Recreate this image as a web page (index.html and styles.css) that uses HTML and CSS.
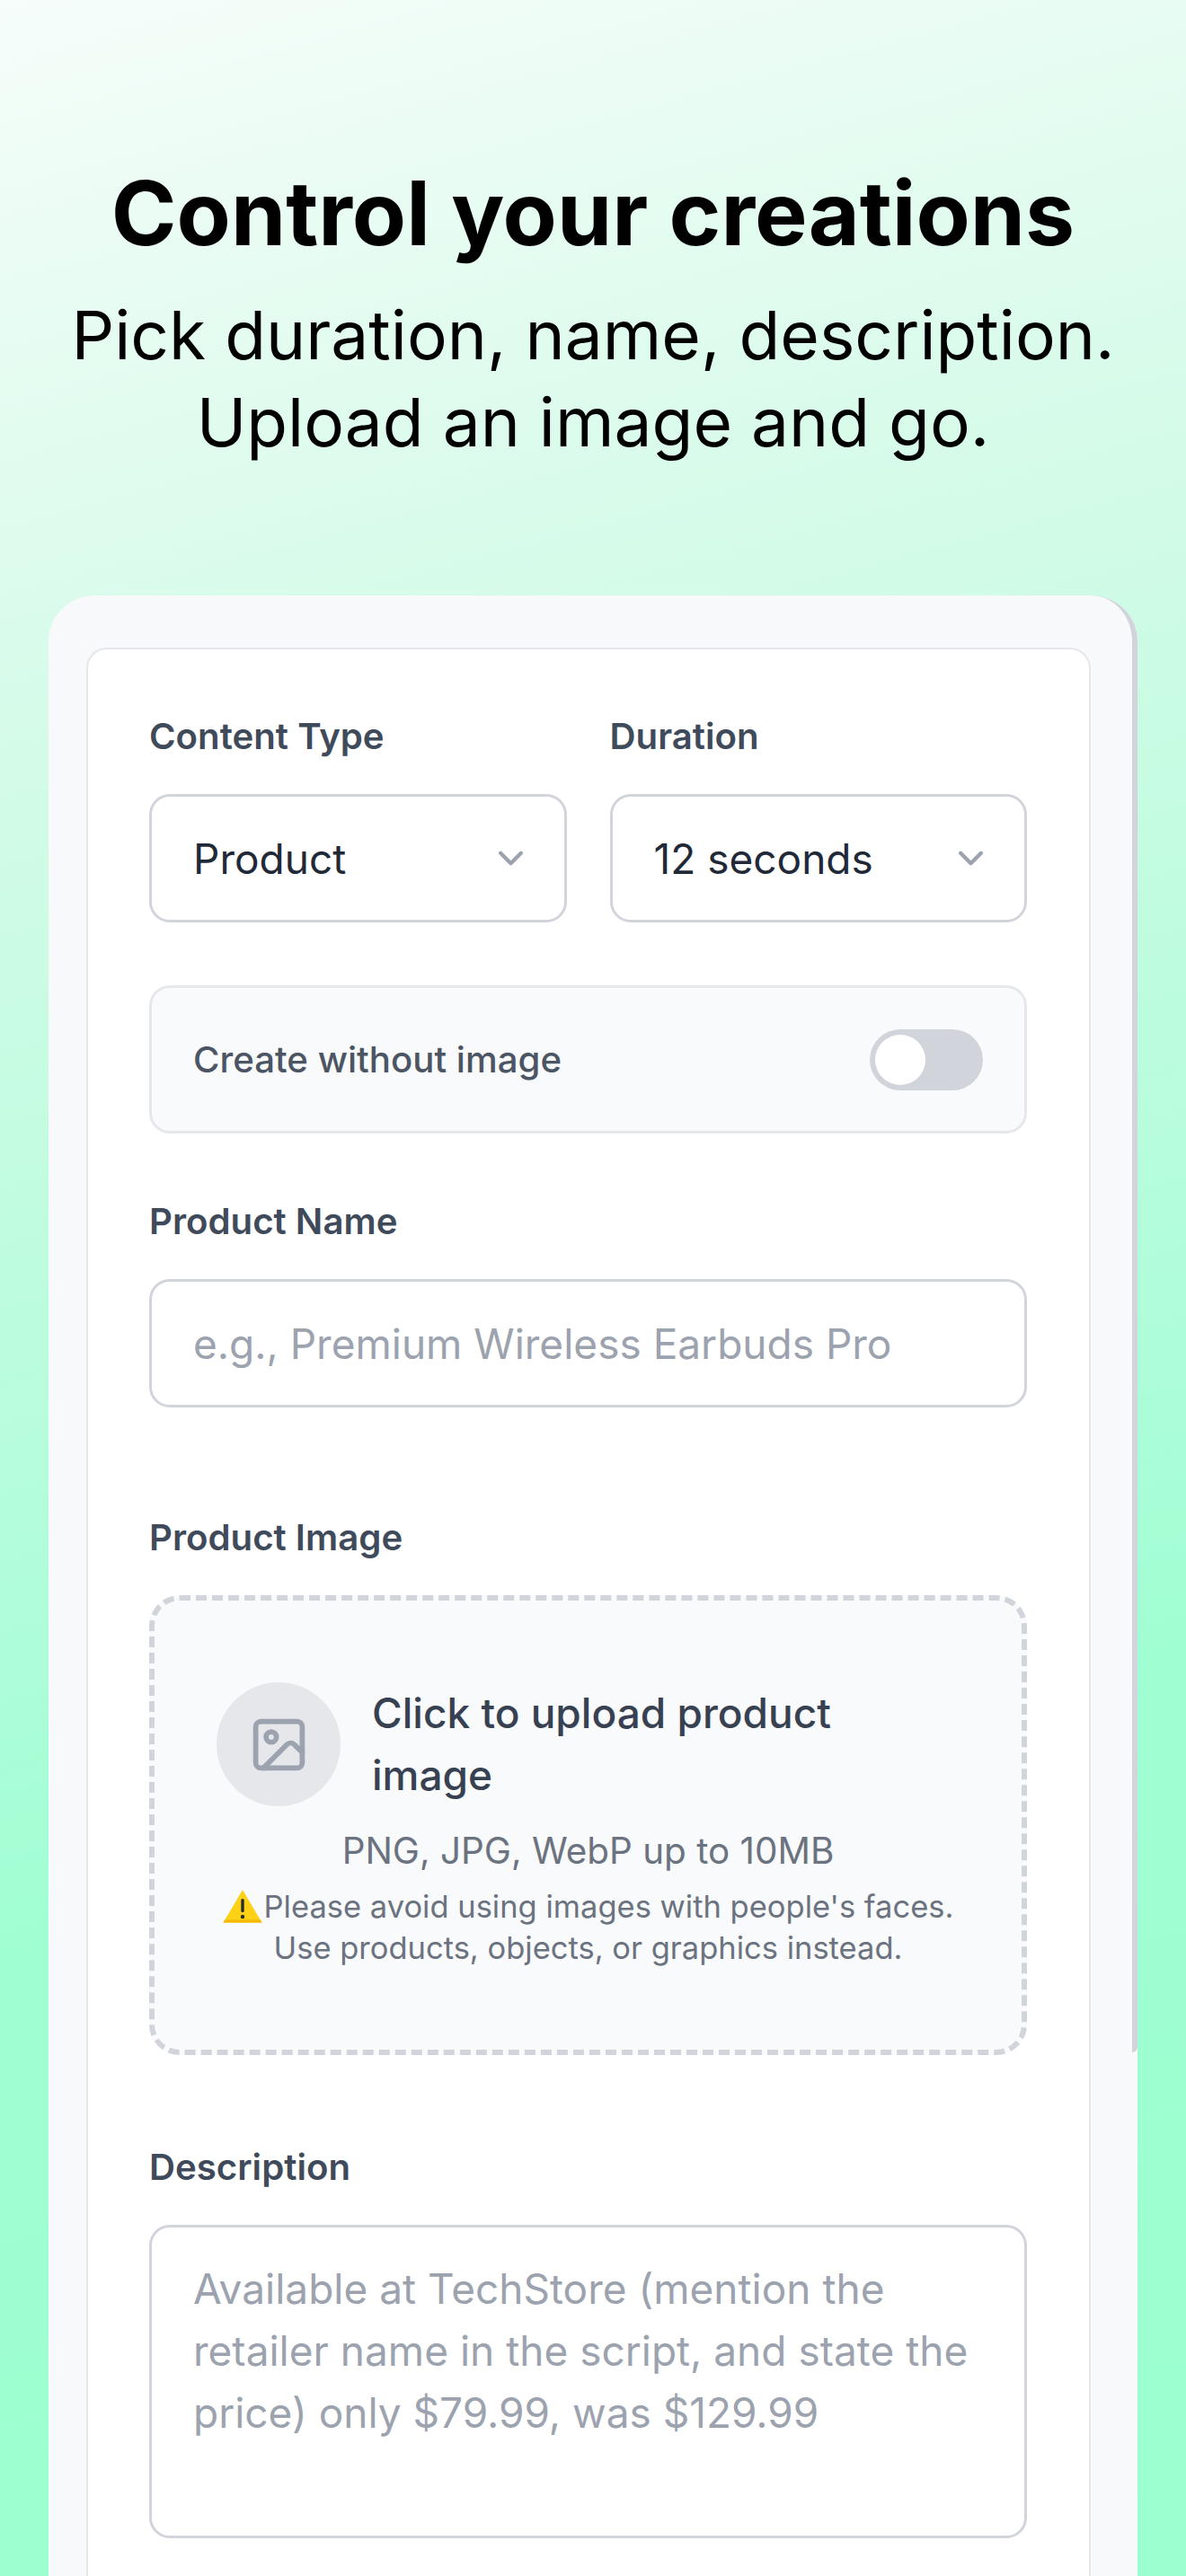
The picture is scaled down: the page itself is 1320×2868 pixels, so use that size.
FILE: index.html
```html
<!DOCTYPE html>
<html lang="en">

<head>
   <meta charset="UTF-8">
   <meta name="viewport" content="width=device-width, initial-scale=1.0">
   <title>Control your creations</title>
   <link rel="stylesheet" href="styles.css">
</head>

<body>

   <header class="hero">
       <h1>Control your creations</h1>
       <p>Pick duration, name, description.<br>Upload an image and go.</p>
   </header>

   <main class="panel">
       <form class="card">
           <div class="two-cols">
               <div>
                   <div class="label">Content Type</div>
                   <div class="control select">
                       <span>Product</span>
                       <svg class="chevron" viewBox="0 0 20 20" fill="none" stroke="currentColor" stroke-width="1.5" stroke-linecap="round" stroke-linejoin="round"><path d="M6 8l4 4 4-4"/></svg>
                   </div>
               </div>
               <div>
                   <div class="label">Duration</div>
                   <div class="control select">
                       <span>12 seconds</span>
                       <svg class="chevron" viewBox="0 0 20 20" fill="none" stroke="currentColor" stroke-width="1.5" stroke-linecap="round" stroke-linejoin="round"><path d="M6 8l4 4 4-4"/></svg>
                   </div>
               </div>
           </div>

           <div class="toggle-row">
               <span>Create without image</span>
               <div class="toggle"><div class="thumb"></div></div>
           </div>

           <div class="label name-label">Product Name</div>
           <div class="control placeholder">e.g., Premium Wireless Earbuds Pro</div>

           <div class="label image-label">Product Image</div>
           <div class="upload">
               <div class="upload-top">
                   <div class="upload-circle">
                       <svg viewBox="0 0 24 24" fill="none" stroke="currentColor" stroke-width="2" stroke-linecap="round" stroke-linejoin="round">
                           <rect x="3" y="3" width="18" height="18" rx="2"/>
                           <circle cx="9" cy="9" r="2"/>
                           <path d="M21 15l-3.086-3.086a2 2 0 0 0-2.828 0L6 21"/>
                       </svg>
                   </div>
                   <div class="upload-title">Click to upload product image</div>
               </div>
               <div class="upload-hint">PNG, JPG, WebP up to 10MB</div>
               <div class="upload-warning">
                   <svg class="warn-icon" viewBox="0 0 44 38">
                       <path d="M22 1L43.500 37.500H0.500Z" fill="#fcd116"/>
                       <path d="M0.500 37.500H43.500L42 34.500H2Z" fill="#f5b800"/>
                       <rect x="20.300" y="11" width="3.400" height="15" rx="1.500" fill="#2b2b2b"/>
                       <circle cx="22" cy="31" r="2.200" fill="#2b2b2b"/>
                   </svg>Please avoid using images with people's faces.<br>Use products, objects, or graphics instead.
               </div>
           </div>

           <div class="label desc-label">Description</div>
           <div class="control textarea placeholder">Available at TechStore (mention the retailer name in the script, and state the price) only $79.99, was $129.99</div>
       </form>
   </main>

</body>

</html>
```

FILE: styles.css
```css
* {
    box-sizing: border-box;
}

html, body {
    margin: 0;
    height: 2868px;
    overflow: hidden;
}

body {
    font-family: Inter, "Noto Sans", sans-serif;
    background: linear-gradient(165deg, #f6fdfa 0%, #d2fbe7 28%, #a0fed3 68%, #9bffcf 100%);
    color: #000;
}

.hero {
    height: 663px;
    padding-top: 170px;
    text-align: center;
}

.hero h1 {
    margin: 0;
    font-size: 98.400px;
    font-weight: 700;
    line-height: 136px;
}

.hero p {
    margin: 19px 0 0;
    font-size: 74.800px;
    line-height: 97px;
}

.panel {
    position: relative;
    width: 1212px;
    height: 2300px;
    margin-left: 54px;
    padding: 58px 52px 0 42px;
    background-color: #f8f9fb;
    border-radius: 51px 51px 0 0;
}

/* grey edge on the right, stops partway down */
.panel::after {
    content: "";
    position: absolute;
    top: 0;
    left: 0;
    right: 0;
    height: 1622px;
    border-right: 6px solid #d1d5db;
    border-radius: 51px 51px 6px 0;
    pointer-events: none;
}

.card {
    height: 2240px;
    padding: 68px 69px 0 68px;
    background-color: #fff;
    border: 2px solid #e5e7eb;
    border-radius: 23px;
}

.two-cols {
    display: grid;
    grid-template-columns: 1fr 1fr;
    gap: 48px;
}

.label {
    margin-bottom: 36px;
    font-size: 40.200px;
    font-weight: 600;
    line-height: 57px;
    color: #3f4a5a;
}

.name-label {
    margin-top: 69px;
}

.image-label {
    margin-top: 116px;
}

.desc-label {
    margin-top: 96px;
}

.control {
    display: flex;
    align-items: center;
    height: 143px;
    padding: 0 46px;
    background-color: #fff;
    border: 3px solid #d1d5db;
    border-radius: 23px;
    font-size: 46px;
    color: #1f2937;
}

.select {
    justify-content: space-between;
    padding-right: 31px;
}

.chevron {
    width: 57px;
    height: 57px;
    color: #9ca3af;
}

.placeholder {
    color: #9ca3af;
}

.textarea {
    display: block;
    height: 349px;
    padding-top: 34px;
    line-height: 69px;
}

.toggle-row {
    display: flex;
    justify-content: space-between;
    align-items: center;
    height: 165px;
    margin-top: 70px;
    padding: 0 46px;
    background-color: #f9fafb;
    border: 3px solid #e5e7eb;
    border-radius: 23px;
    font-size: 40.200px;
    font-weight: 500;
    color: #4b5563;
}

.toggle {
    width: 126px;
    height: 68px;
    padding: 6px;
    background-color: #d1d5db;
    border-radius: 34px;
}

.thumb {
    width: 56px;
    height: 56px;
    background-color: #fff;
    border-radius: 50%;
}

.upload {
    height: 512px;
    padding: 91px 69px 0;
    background-color: #f9fafb;
    border: 6px dashed #d1d5db;
    border-radius: 34px;
    text-align: center;
}

.upload-top {
    display: flex;
    align-items: center;
    gap: 35px;
}

.upload-circle {
    display: flex;
    flex: none;
    justify-content: center;
    align-items: center;
    width: 138px;
    height: 138px;
    background-color: #e5e7eb;
    border-radius: 50%;
    color: #9ca3af;
}

.upload-circle svg {
    width: 69px;
    height: 69px;
}

.upload-title {
    max-width: 560px;
    font-size: 46px;
    font-weight: 500;
    line-height: 69px;
    color: #374151;
    text-align: left;
}

.upload-hint {
    margin-top: 21px;
    font-size: 40.400px;
    line-height: 57px;
    color: #6b7280;
}

.upload-warning {
    margin: 11px -40px 0;
    font-size: 34.500px;
    line-height: 46px;
    color: #6b7280;
}

.warn-icon {
    width: 44px;
    height: 38px;
    margin-right: 2px;
    vertical-align: -6px;
}
```
